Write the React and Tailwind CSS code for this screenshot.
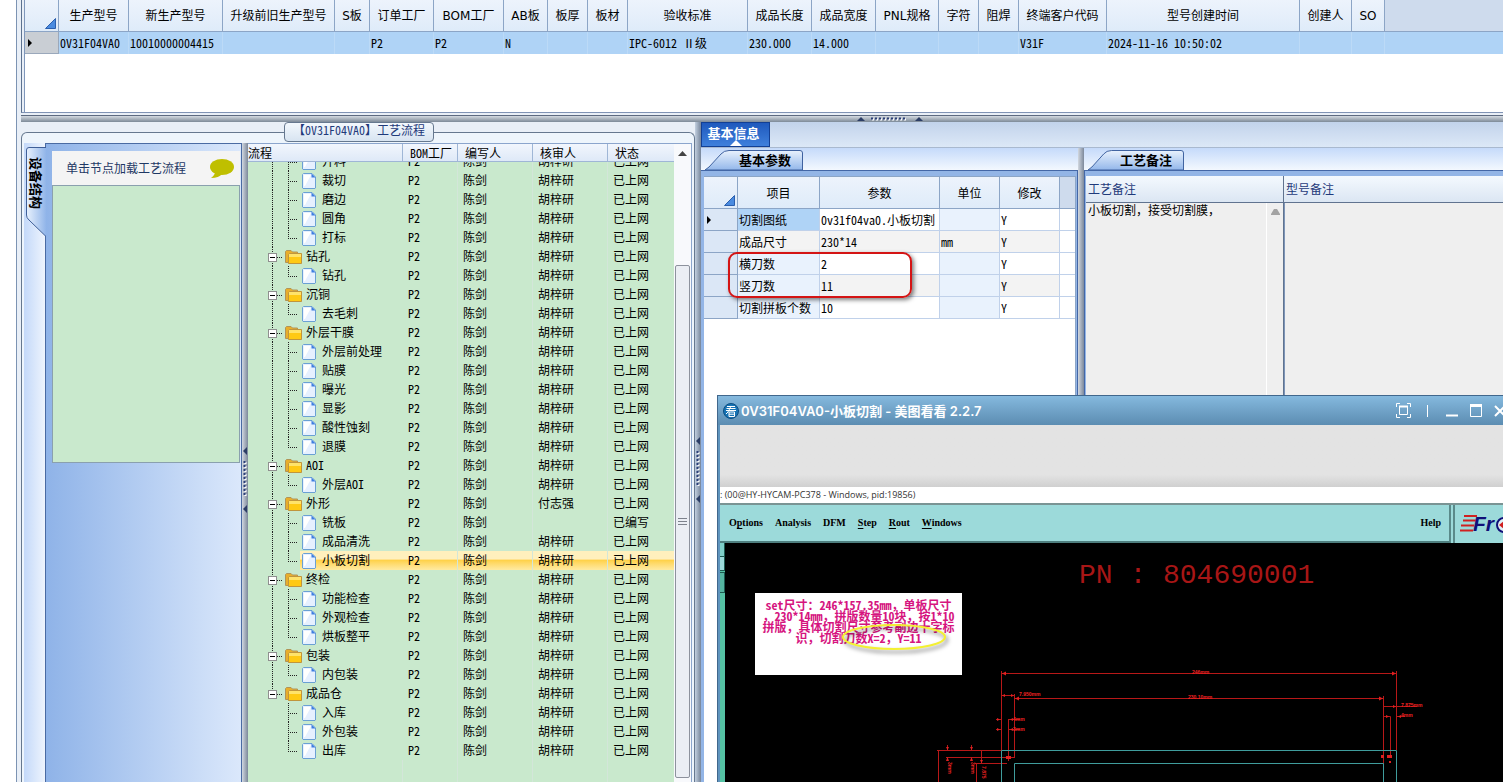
import { useLayoutEffect, useRef, useState } from 'react';

const MODEL_COLUMNS = [
  { title: '生产型号', width: 'w-[70px]', value: '0V31F04VA0' },
  { title: '新生产型号', width: 'w-[94px]', value: '10010000004415' },
  { title: '升级前旧生产型号', width: 'w-[112px]', value: '' },
  { title: 'S板', width: 'w-[35px]', value: '' },
  { title: '订单工厂', width: 'w-[64px]', value: 'P2' },
  { title: 'BOM工厂', width: 'w-[70px]', value: 'P2' },
  { title: 'AB板', width: 'w-[44px]', value: 'N' },
  { title: '板厚', width: 'w-[40px]', value: '' },
  { title: '板材', width: 'w-[40px]', value: '' },
  { title: '验收标准', width: 'w-[120px]', value: 'IPC-6012 Ⅱ级' },
  { title: '成品长度', width: 'w-[64px]', value: '230.000' },
  { title: '成品宽度', width: 'w-[64px]', value: '14.000' },
  { title: 'PNL规格', width: 'w-[63px]', value: '' },
  { title: '字符', width: 'w-[40px]', value: '' },
  { title: '阻焊', width: 'w-[40px]', value: '' },
  { title: '终端客户代码', width: 'w-[88px]', value: 'V31F' },
  { title: '型号创建时间', width: 'w-[193px]', value: '2024-11-16 10:50:02' },
  { title: '创建人', width: 'w-[52px]', value: '' },
  { title: 'SO', width: 'w-[33px]', value: '' },
];

const FLOW = [
  { name: '开料' },
  { name: '裁切' },
  { name: '磨边' },
  { name: '圆角' },
  { name: '打标', last: true },
  { name: '钻孔', folder: true },
  { name: '钻孔', last: true },
  { name: '沉铜', folder: true },
  { name: '去毛刺', last: true },
  { name: '外层干膜', folder: true },
  { name: '外层前处理' },
  { name: '贴膜' },
  { name: '曝光' },
  { name: '显影' },
  { name: '酸性蚀刻' },
  { name: '退膜', last: true },
  { name: 'AOI', folder: true },
  { name: '外层AOI', last: true },
  { name: '外形', folder: true, checker: '付志强' },
  { name: '铣板', checker: '', status: '已编写' },
  { name: '成品清洗' },
  { name: '小板切割', last: true },
  { name: '终检', folder: true },
  { name: '功能检查' },
  { name: '外观检查' },
  { name: '烘板整平', last: true },
  { name: '包装', folder: true },
  { name: '内包装', last: true },
  { name: '成品仓', folder: true, lastFolder: true },
  { name: '入库', tail: true },
  { name: '外包装', tail: true },
  { name: '出库', last: true, tail: true },
];

const PARAMS = [
  { name: '切割图纸', value: '0v31f04va0.小板切割', unit: '', edit: 'Y' },
  { name: '成品尺寸', value: '230*14', unit: 'mm', edit: 'Y' },
  { name: '横刀数', value: '2', unit: '', edit: 'Y' },
  { name: '竖刀数', value: '11', unit: '', edit: 'Y' },
  { name: '切割拼板个数', value: '10', unit: '', edit: 'Y' },
];

const MENUS = [
  ['O', 'p', 'tions'],
  ['Analysis', '', ''],
  ['DFM', '', ''],
  ['', 'S', 'tep'],
  ['', 'R', 'out'],
  ['', 'W', 'indows'],
];

const CornerMark = () => (
  <svg className="ml-auto mr-[2px] block" width="11" height="11" aria-hidden="true">
    <path d="M10.500 .5V10.500H.5Z" fill="#4a8be0" stroke="#2b5fae" />
  </svg>
);

const RowArrow = () => (
  <svg className="ml-[3px] block" width="4" height="8" aria-hidden="true">
    <path d="M0 0L4 4L0 8Z" fill="#000" />
  </svg>
);

const Grip = ({ vertical }) =>
  vertical ? (
    <svg className="block" width="6" height="68" aria-hidden="true">
      <path d="M5 1V9L1 5Z M5 59V67L1 63Z" fill="#2c3e66" />
      <path d="M3.500 16V52" stroke="#fff" strokeWidth="2" strokeDasharray="2 2" />
      <path d="M2.500 15V51" stroke="#2b3f78" strokeWidth="2" strokeDasharray="2 2" />
    </svg>
  ) : (
    <svg className="block" width="68" height="6" aria-hidden="true">
      <path d="M1 5H9L5 1Z M59 5H67L63 1Z" fill="#2c3e66" />
      <path d="M16 3.500H52" stroke="#fff" strokeWidth="2" strokeDasharray="2 2" />
      <path d="M15 2.500H51" stroke="#2b3f78" strokeWidth="2" strokeDasharray="2 2" />
    </svg>
  );

const FolderIcon = () => (
  <svg className="block shrink-0" width="17" height="14" viewBox="0 0 17 14" aria-hidden="true">
    <path d="M.5 12.500V1.500L1.500 .5H6L7.500 2H12.500V12.500Z" fill="#e8ae2c" stroke="#b09458" />
    <path d="M3.500 13.500V4.500L4.500 3.500H16.500V13.500Z" fill="#ffc914" stroke="#c0953c" />
    <path d="M4 4H16V7H4Z" fill="#ffe36a" />
  </svg>
);

const PageIcon = () => (
  <svg className="block shrink-0" width="14" height="16" viewBox="0 0 14 16" aria-hidden="true">
    <path d="M.5 1.500L1.500 .5H10L13.500 4V15L13 15.500H1L.5 15Z" fill="#e6f0ff" stroke="#6aa0d4" />
    <path d="M2 2H9L3 13H2Z" fill="#fff" />
    <path d="M9.500 .5L13.500 4.500H9.500Z" fill="#3f7ee0" />
  </svg>
);

// Dotted guides to the left of every node
const Guides = ({ node }) => {
  if (node.folder) {
    return (
      <svg className="block shrink-0" width="37" height="19" aria-hidden="true">
        <path d={node.lastFolder ? 'M24.500 0V10' : 'M24.500 0V19'} stroke="#222" strokeDasharray="1 1" />
        <path d="M29 10.500H35" stroke="#222" strokeDasharray="1 1" />
        <rect x="20.500" y="6.500" width="8" height="8" fill="#fff" stroke="#8f8f8f" />
        <path d="M22 10.500H27" stroke="#000" />
      </svg>
    );
  }
  return (
    <svg className="block shrink-0" width="52" height="19" aria-hidden="true">
      {!node.tail && <path d="M24.500 0V19" stroke="#222" strokeDasharray="1 1" />}
      <path d={node.last ? 'M40.500 0V10' : 'M40.500 0V19'} stroke="#222" strokeDasharray="1 1" />
      <path d="M40 10.500H50" stroke="#222" strokeDasharray="1 1" />
    </svg>
  );
};

const SlantTab = ({ children, narrow }) => (
  <button type="button" className={`relative flex h-5 items-center justify-end pr-3 text-[13px] font-bold text-black ${narrow ? 'w-24' : 'w-[98px]'}`}>
    <svg className="absolute inset-0 h-full w-full" viewBox="0 0 98 20" preserveAspectRatio="none" aria-hidden="true">
      <defs>
        <linearGradient id="slant" x1="0" y1="0" x2="0" y2="1">
          <stop offset="0" stopColor="#e9f2fd" />
          <stop offset="1" stopColor="#93b7ea" />
        </linearGradient>
      </defs>
      <path d="M0 20L4 17L16 4Q19 .5 24 .5H95Q97.500 .5 97.500 3V20Z" fill="url(#slant)" stroke="#3f62a0" />
    </svg>
    <span className="relative">{children}</span>
  </button>
);

const ModelGrid = () => (
  <section className="h-[113px] border-b border-l border-b-[#8093b5] border-l-[#5d7290] bg-[#e9eff7] pl-[2px]">
    <div className="h-full border-l border-[#7f97bb] bg-white">
      <table className="w-full table-fixed border-separate border-spacing-0">
        <thead>
          <tr className="h-8 bg-linear-to-b from-[#edf3fc] to-[#deebf9] font-['DejaVu_Sans','Noto_Sans_CJK_SC',sans-serif]">
            <th className="w-[34px] border-b border-r border-[#8ca5c6] pt-4"><CornerMark /></th>
            {MODEL_COLUMNS.map((c) => (
              <th key={c.title} className={`${c.width} whitespace-nowrap border-b border-r border-[#8ca5c6] font-normal`}>
                {c.title}
              </th>
            ))}
            <th aria-label="空列" className="border-b border-[#8ca5c6] bg-[#cedbed]" />
          </tr>
        </thead>
        <tbody>
          <tr className="h-[22px] bg-[#afd3f6]">
            <td className="border-b border-r border-[#9aa8bb] bg-[#c9ced4]"><RowArrow /></td>
            {MODEL_COLUMNS.map((c) => (
              <td key={c.title} className="whitespace-nowrap border-r border-[#bcdaf7] pl-px">{c.value}</td>
            ))}
            <td />
          </tr>
        </tbody>
      </table>
    </div>
  </section>
);

const DevicePanel = () => (
  <>
    <div className="w-[21px] shrink-0 bg-linear-to-r from-[#c4d9f9] to-[#eef4fd] pt-1">
      <button type="button" className="relative ml-[2px] flex h-[90px] w-[21px] items-start justify-center pt-[10px]">
        <svg className="absolute inset-0" width="21" height="90" aria-hidden="true">
          <defs>
            <linearGradient id="dock" x1="0" y1="0" x2="1" y2="0">
              <stop offset="0" stopColor="#e8f1fd" />
              <stop offset="1" stopColor="#8db2e8" />
            </linearGradient>
          </defs>
          <path d="M21 .5H3Q.5 .5 .5 3V68Q.5 71 3 73L20 89.500H21Z" fill="url(#dock)" />
          <path d="M20 .5H3Q.5 .5 .5 3V68Q.5 71 3 73L20 89.500" fill="none" stroke="#3f5f98" />
        </svg>
        <span className="relative text-[13px] font-bold leading-none text-black [text-orientation:sideways] [writing-mode:vertical-rl]">设备结构</span>
      </button>
    </div>
    <div className="w-[197px] shrink-0 border-l border-r border-t border-[#4a6ba3] bg-linear-to-r from-[#8fb3e8] to-[#dbe8fb] pl-[6px] pr-px pt-[7px]">
      <div className="flex h-[34px] items-center justify-between bg-[#f4f4f4] pl-[14px] pr-[5px] text-[#1f3864]">
        <span>单击节点加载工艺流程</span>
        <svg width="26" height="22" viewBox="0 0 26 22" aria-hidden="true">
          <ellipse cx="13" cy="10" rx="12" ry="8" fill="#bfbf00" />
          <path d="M6 15Q6 18 2 21Q10 21 13 17Z" fill="#bfbf00" />
        </svg>
      </div>
      <div className="h-[278px] border border-[#8aa0ae] bg-[#c9e9cd]" />
    </div>
  </>
);

const FlowTree = () => {
  const scrollRef = useRef(null);
  const [selected, setSelected] = useState(21);

  useLayoutEffect(() => {
    scrollRef.current.scrollTop = 10;
  }, []);

  return (
    <div className="flex min-w-0 flex-1 border-r border-t border-[#8ba5cd]">
      <div className="flex min-w-0 flex-1 flex-col bg-[#c9e9cd]">
        <table className="w-full shrink-0 table-fixed border-separate border-spacing-0">
          <thead>
            <tr className="h-[18px] bg-linear-to-b from-[#f2f6fd] to-[#dde8f7] text-left">
              <th className="w-[155px] border-b border-r border-[#9fb6d6] font-normal">流程</th>
              <th className="w-[55px] whitespace-nowrap border-b border-r border-[#9fb6d6] pl-[7px] font-normal">BOM工厂</th>
              <th className="w-[75px] border-b border-r border-[#9fb6d6] pl-[7px] font-normal">编写人</th>
              <th className="w-[75px] border-b border-r border-[#9fb6d6] pl-[7px] font-normal">核审人</th>
              <th className="border-b border-[#9fb6d6] pl-[7px] font-normal">状态</th>
            </tr>
          </thead>
        </table>
        <div ref={scrollRef} className="min-h-0 flex-1 overflow-hidden">
          <table aria-label="工艺流程" className="w-full table-fixed border-separate border-spacing-0">
            <colgroup>
              <col className="w-[155px]" />
              <col className="w-[55px]" />
              <col className="w-[75px]" />
              <col className="w-[75px]" />
              <col />
            </colgroup>
            <tbody>
              {FLOW.map((node, i) => {
                const tone = i === selected ? 'bg-linear-to-b from-[#fff0bd] from-40% via-[#ffd24a] via-50% to-[#ffeaa0]' : '';
                return (
                  <tr key={i} className="h-[19px]" onClick={() => setSelected(i)}>
                    <td className="overflow-hidden whitespace-nowrap">
                      <div className="flex h-[19px]">
                        <Guides node={node} />
                        <div className={`flex flex-1 items-center ${node.folder ? 'gap-1' : 'gap-[6px] pl-[2px]'} ${tone}`}>
                          {node.folder ? <FolderIcon /> : <PageIcon />}
                          <span className="pb-[2px]">{node.name}</span>
                        </div>
                      </div>
                    </td>
                    <td className={`border-r border-[#d3e6d9] pb-[2px] pl-[5px] ${tone}`}>P2</td>
                    <td className={`border-r border-[#d3e6d9] pb-[2px] pl-[5px] ${tone}`}>陈剑</td>
                    <td className={`border-r border-[#d3e6d9] pb-[2px] pl-[5px] ${tone}`}>{node.checker ?? '胡梓研'}</td>
                    <td className={`pb-[2px] pl-[5px] ${tone}`}>{node.status ?? '已上网'}</td>
                  </tr>
                );
              })}
              <tr className="h-20">
                <td className="border-r border-[#d3e6d9]" />
                <td className="border-r border-[#d3e6d9]" />
                <td className="border-r border-[#d3e6d9]" />
                <td className="border-r border-[#d3e6d9]" />
                <td />
              </tr>
            </tbody>
          </table>
        </div>
      </div>
      <div className="flex w-[17px] flex-col items-center bg-[#f8f9fc] pb-1">
        <button type="button" aria-label="向上滚动" className="flex h-[18px] w-full shrink-0 items-center justify-center">
          <svg width="9" height="5" aria-hidden="true"><path d="M0 5L4.500 0L9 5Z" fill="#444" /></svg>
        </button>
        <div className="h-[103px] shrink-0" />
        <div className="flex w-[15px] flex-1 items-center justify-center rounded-xs border border-[#8d929d] bg-[#ebeef4]">
          <svg width="9" height="8" aria-hidden="true"><path d="M0 .5H9M0 3.500H9M0 6.500H9" stroke="#7d828c" /></svg>
        </div>
      </div>
    </div>
  );
};

const ParamPanel = () => (
  <div className="flex w-[377px] shrink-0 flex-col bg-linear-to-b from-[#c5dafa] to-[#f3f8fe] to-[22px] pt-[2px]">
    <div className="pl-1"><SlantTab>基本参数</SlantTab></div>
    <div className="relative min-h-0 flex-1 border-r border-t border-[#4467a6] bg-[#93b5e6] pl-[3px] pr-px pt-[5px]">
      <div className="h-full border-r border-t border-[#8ca5c6] bg-white">
        <table className="w-full table-fixed border-separate border-spacing-0">
          <thead>
            <tr className="h-8 bg-linear-to-b from-[#edf3fc] to-[#deebf9]">
              <th className="w-[34px] border-b border-r border-[#8ca5c6] pt-4"><CornerMark /></th>
              <th className="w-[82px] border-b border-r border-[#8ca5c6] font-normal">项目</th>
              <th className="w-[120px] border-b border-r border-[#8ca5c6] font-normal">参数</th>
              <th className="w-[60px] border-b border-r border-[#8ca5c6] font-normal">单位</th>
              <th className="w-[60px] border-b border-r border-[#8ca5c6] font-normal">修改</th>
              <th aria-label="空列" className="border-b border-[#8ca5c6] bg-[#cedbed]" />
            </tr>
          </thead>
          <tbody>
            {PARAMS.map((p, i) => (
              <tr key={p.name} className={`h-[22px] ${i % 2 ? 'bg-[#f3f3f3]' : 'bg-white'}`}>
                <td className="border-b border-r border-[#8ca5c6] bg-[#dbe7f6]">{i === 0 && <RowArrow />}</td>
                <td className={`whitespace-nowrap border-b border-r border-[#c0d1ea] pl-px ${i === 0 ? 'bg-[#afd3f6]' : i === 1 ? '' : 'bg-[#e9f2fd]'}`}>{p.name}</td>
                <td className="whitespace-nowrap border-b border-r border-[#c0d1ea] pl-px">{p.value}</td>
                <td className={`border-b border-r border-[#c0d1ea] pl-px ${p.unit ? '' : 'bg-[#e9f2fd]'}`}>{p.unit}</td>
                <td className="border-b border-r border-[#c0d1ea] pl-px">{p.edit}</td>
                <td className="border-b border-[#c0d1ea] bg-white" />
              </tr>
            ))}
          </tbody>
        </table>
      </div>
      <div className="pointer-events-none absolute left-[27px] top-[81px] h-[46px] w-[184px] rounded-[9px] border-2 border-[#d41414] shadow-[2px_2px_4px_rgba(0,0,0,0.5)]" />
    </div>
  </div>
);

const NotePanel = () => (
  <div className="flex min-w-0 flex-1 flex-col bg-linear-to-b from-[#c5dafa] to-[#f3f8fe] to-[22px] pt-[2px]">
    <div className="pl-1"><SlantTab narrow>工艺备注</SlantTab></div>
    <div className="flex min-h-0 flex-1 border-l border-t border-[#4467a6] bg-[#93b5e6] pl-px pt-[5px]">
      <div className="flex w-[198px] shrink-0 flex-col border-r border-[#60738f]">
        <label htmlFor="processNote" className="flex h-[27px] items-center border-b border-[#60738f] bg-linear-to-b from-[#f4f9fe] to-[#dbe6f3] pl-[2px] text-[#1f3a7a]">工艺备注</label>
        <div className="flex min-h-0 flex-1 bg-[#efefef]">
          <textarea id="processNote" readOnly value="小板切割，接受切割膜，" className="block min-w-0 flex-1 resize-none overflow-hidden pl-[2px] leading-[14px] outline-none" />
          <div className="w-[17px] border-l border-white pt-[6px]">
            <svg className="mx-auto block" width="9" height="6" aria-hidden="true"><path d="M0 6V5L3 0H6L9 5V6Z" fill="#a3a3a3" /></svg>
          </div>
        </div>
      </div>
      <div className="flex min-w-0 flex-1 flex-col">
        <label htmlFor="modelNote" className="flex h-[27px] items-center border-b border-[#60738f] bg-linear-to-b from-[#f4f9fe] to-[#dbe6f3] pl-[2px] text-[#1f3a7a]">型号备注</label>
        <textarea id="modelNote" readOnly value="" className="block min-h-0 flex-1 resize-none border-l border-[#7d95b8] bg-[#efefef] outline-none" />
      </div>
    </div>
  </div>
);

// Board outline with its dimension lines
const BoardDrawing = () => (
  <svg className="absolute inset-0" width="778" height="239" aria-hidden="true">
    <g fill="none" stroke="#b81818">
      <path d="M276.500 128V226 M276.500 130.500H671.500 M671.500 128V207" />
      <path d="M276.500 152.500H289.500 M289.500 155.500H658.500 M289.500 151V214 M658.500 153V234" />
      <path d="M659 163.500H692 M659 173.500H665.500V214 M672 173.500H680" />
      <path d="M271 176.500H276 M271 186.500H276 M283.500 176V218 M284 176.500H295 M284 186.500H295" />
      <path d="M212 207.500H276 M213.500 207V239 M221 214.500H290 M250 220.500H282 M251.500 220V239" />
      <path d="M222.500 202V207 M246.500 202V207 M256.500 208V220" />
    </g>
    <g fill="#e02020">
      <path d="M277 130.500L281 128.500V132.500Z M671 130.500L667 128.500V132.500Z M290 155.500L294 153.500V157.500Z M658 155.500L654 153.500V157.500Z" />
      <path d="M277 152.500L280 151V154Z M289 152.500L286 151V154Z M671 163.500L668 162V165Z M664 173.500L661 172V175Z M673 173.500L676 172V175Z" />
      <path d="M275 176.500L272 175V178Z M275 186.500L272 185V188Z M285 176.500L288 175V178Z M285 186.500L288 185V188Z" />
      <path d="M222.500 207L221 204H224Z M246.500 207L245 204H248Z M222.500 214L221 218H224Z M246.500 214L245 218H248Z" />
      <path d="M281 213H286V216H281Z M662 212H667V215H662Z M656 212H659V215H656Z M664 218H666V220H664Z M256.500 220L255 217H258Z" />
    </g>
    <g fill="none" stroke="#3f9c9c">
      <path d="M276.500 239V207.500H671.500V239 M289.500 239V220.500H658.500V239" />
    </g>
    <g fill="#f02222" className="font-['Liberation_Sans',sans-serif] text-[5px] font-bold">
      <text x="467" y="131">246mm</text>
      <text x="463" y="156">230.10mm</text>
      <text x="294" y="153">7.950mm</text>
      <text x="676" y="164">7.875mm</text>
      <text x="676" y="174">4mm</text>
      <text x="288" y="178">4mm</text>
      <text x="288" y="188">3mm</text>
      <text transform="translate(223 219) rotate(90)">3mm</text>
      <text transform="translate(246 219) rotate(90)">3mm</text>
      <text transform="translate(257 223) rotate(90)">7.875</text>
    </g>
  </svg>
);

const ViewerWindow = () => (
  <div className="absolute bottom-0 left-[717px] right-0 top-[395px] flex flex-col border-l border-t border-[#41678c] bg-[#5f94bd] pl-[2px]">
    <header className="-ml-[2px] flex h-[29px] shrink-0 items-center bg-linear-to-b from-[#85b9de] to-[#5c8db2] pl-[5px] text-white">
      <svg width="16" height="16" viewBox="0 0 16 16" aria-hidden="true">
        <circle cx="8" cy="8" r="7.500" fill="#1673b4" stroke="#0c4d82" />
        <path d="M4 3.500H12M3.500 5.500H12.500M3 7.500H13M8 3L5 9L3 11M6 9H11.500V13.500H6ZM6 11.200H11.500" stroke="#fff" fill="none" />
      </svg>
      <h2 className="ml-[2px] whitespace-nowrap font-['Inter','Noto_Sans_CJK_SC',sans-serif] text-[13px] font-semibold">0V31F04VA0-小板切割 - 美图看看 2.2.7</h2>
      <div className="-mr-[3px] ml-auto flex items-center">
        <button type="button" aria-label="全屏" className="mr-4">
          <svg className="block" width="15" height="15" fill="none" stroke="#fff" aria-hidden="true">
            <path d="M.5 4V.5H4M11 .5H14.500V4M14.500 11V14.500H11M4 14.500H.5V11" />
            <path d="M3 3.500H12" strokeWidth="2" /><path d="M3.500 3V11.500H11.500V3" />
          </svg>
        </button>
        <span className="mr-[18px] h-3 w-px bg-white" />
        <button type="button" aria-label="最小化" className="mr-3">
          <svg className="block" width="12" height="13" aria-hidden="true"><path d="M0 11.500H12" stroke="#fff" strokeWidth="2" /></svg>
        </button>
        <button type="button" aria-label="最大化" className="mr-3">
          <svg className="block" width="12" height="13" fill="none" stroke="#fff" aria-hidden="true"><path d="M.5 1V12.500H11.500V1" /><path d="M0 1.500H12" strokeWidth="3" /></svg>
        </button>
        <button type="button" aria-label="关闭">
          <svg className="block" width="12" height="12" stroke="#fff" strokeWidth="2" aria-hidden="true"><path d="M1 1L11 11M11 1L1 11" /></svg>
        </button>
      </div>
    </header>
    <div className="h-[62px] shrink-0 bg-linear-to-b from-[#e3e3e3] from-80% to-[#d0d0d0]" />
    <div className="flex h-4 shrink-0 items-center bg-white font-['Open_Sans',sans-serif] text-[9px] text-[#333]">: (00@HY-HYCAM-PC378 - Windows, pid:19856)</div>
    <div className="flex h-10 shrink-0 border-t-2 border-[#7a9494] bg-[#9cdada] font-['Liberation_Serif',serif] text-[10px] font-bold text-black">
      <nav className="flex flex-1 items-center gap-3 border-b-2 border-r-2 border-b-[#4f8080] border-r-[#5a8a8a] pl-[9px] pr-2">
        {MENUS.map(([before, key, after]) => (
          <button key={before + key} type="button" className="whitespace-nowrap">
            {before}<u className="underline-offset-2">{key}</u>{after}
          </button>
        ))}
        <button type="button" className="ml-auto">Help</button>
      </nav>
      <div className="ml-[2px] w-[50px] border-l-2 border-[#5a8a8a] pl-1 pt-[5px]">
        <svg className="block overflow-visible" width="44" height="28" aria-hidden="true">
          <path d="M5 6H18M4 10.500H17M2 15.500H15M1 20.500H14" stroke="#d02020" strokeWidth="2" />
          <text x="14" y="21" fill="#101078" className="font-['Liberation_Sans',sans-serif] text-[21px] font-bold italic">Fr</text>
          <circle cx="45" cy="15" r="7" fill="#dff0f6" stroke="#101078" strokeWidth="2" />
          <path d="M40 15L45 11V19Z" fill="#d02020" />
        </svg>
      </div>
    </div>
    <div className="flex min-h-0 flex-1">
      <div className="w-[5px] bg-[#55c2a4]">
        <div className="h-[14px] border-b border-r border-[#1d5a50] bg-[#7fcfc8]" />
        <div className="h-[14px] border-b border-r border-[#1d5a50] bg-[#9cdada]" />
        <div className="mt-px h-[21px] border border-l-0 border-[#1d5a50] bg-[#55b5a0]" />
      </div>
      <div className="relative flex-1 overflow-hidden bg-black">
        <BoardDrawing />
        <p className="absolute left-[354px] top-[15px] whitespace-pre font-['Liberation_Mono',monospace] text-[28px] leading-9 text-[#a81616]">PN : 804690001</p>
        <div className="absolute left-[30px] top-[50px] h-[82px] w-[207px] bg-white pt-[6px] text-center font-bold leading-[11px] text-[#d6157f]">
          <p>set尺寸：246*157.35mm，单板尺寸</p>
          <p>，230*14mm，拼版数量10块，按1*10</p>
          <p>拼版，具体切割尺寸参考副边十字标</p>
          <p>识，切割刀数X=2，Y=11</p>
        </div>
        <svg className="absolute left-[112px] top-[76px] drop-shadow-[2px_3px_2px_rgba(0,0,0,0.5)]" width="116" height="40" aria-hidden="true">
          <ellipse cx="57" cy="18" rx="51" ry="12" fill="none" stroke="#f4f032" strokeWidth="2" />
        </svg>
      </div>
    </div>
  </div>
);

const App = () => (
  <div className="relative flex h-screen overflow-hidden bg-white pl-4 font-['Noto_Sans_Mono_CJK_SC','Noto_Sans_CJK_SC',monospace] text-[12px] leading-4 text-black">
    <div className="flex min-w-0 flex-1 flex-col border-l border-[#7c93b3] bg-[#e9eff7] pl-1">
      <ModelGrid />
      <div className="mt-[2px] flex h-[7px] shrink-0 border-t border-[#5d6a80] bg-linear-to-b from-[#d5dbe2] to-[#7d8a98] pl-[835px]">
        <Grip />
      </div>
      <div className="flex min-h-0 flex-1">
        <fieldset className="flex w-[674px] min-w-0 shrink-0 flex-col rounded-t-md border border-b-0 border-[#66788f] bg-[#eef5fc]">
          <legend className="ml-[262px] flex h-5 w-[150px] items-center justify-center whitespace-nowrap rounded-sm border border-[#66788f] bg-linear-to-b from-[#f3f8fd] to-[#d8e4f1] pb-1 text-[#1f3a7a]">【0V31F04VA0】工艺流程</legend>
          <div className="flex min-h-0 flex-1 pl-[2px] pr-[2px] pt-px">
            <DevicePanel />
            <div className="w-[6px] shrink-0 bg-linear-to-r from-[#d2d8e0] to-[#7d899b] pt-[303px]"><Grip vertical /></div>
            <FlowTree />
          </div>
        </fieldset>
        <div className="w-[6px] shrink-0 bg-linear-to-r from-[#c3d0e0] to-[#77869b] pt-[314px]"><Grip vertical /></div>
        <div className="flex min-w-0 flex-1 flex-col">
          <div className="h-[26px] shrink-0 border-b border-[#a9b9cf] bg-linear-to-b from-[#c2d3eb] to-[#dce8f7]">
            <button type="button" className="relative h-full w-[69px] border border-[#123f94] bg-linear-to-b from-[#1f59bd] to-[#3f80dc] pb-1 pr-1 text-[13px] font-bold text-white">
              基本信息
              <svg className="absolute bottom-0 left-[28px]" width="12" height="6" aria-hidden="true"><path d="M0 6L6 0L12 6Z" fill="#fff" /></svg>
            </button>
          </div>
          <div className="flex min-h-0 flex-1">
            <ParamPanel />
            <div className="w-[6px] shrink-0 bg-linear-to-r from-[#d2d8e0] to-[#7d899b]" />
            <NotePanel />
          </div>
        </div>
      </div>
    </div>
    <ViewerWindow />
  </div>
);

export default App;
